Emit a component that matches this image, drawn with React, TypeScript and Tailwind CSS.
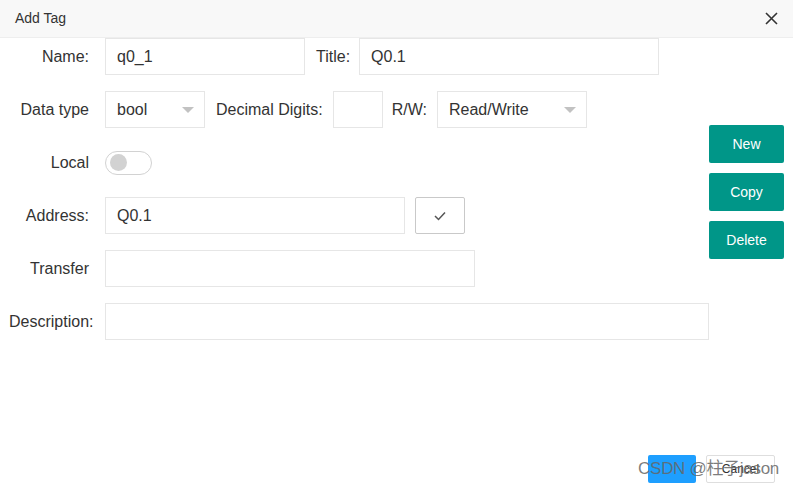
import { ReactNode } from "react";

const FONT = { fontFamily: '"Liberation Sans", Arial, "Noto Sans CJK SC", sans-serif' };

function Label({ children }: { children: ReactNode }) {
  return (
    <span className="w-[80px] shrink-0 whitespace-nowrap text-right text-[16px] text-[#333]">
      {children}
    </span>
  );
}

function Field({ value = "", className = "" }: { value?: string; className?: string }) {
  return (
    <div
      className={`flex h-[37px] shrink-0 items-center border border-[#e6e6e6] bg-white px-[11px] text-[16px] text-[#333] ${className}`}
    >
      {value}
    </div>
  );
}

function Select({ value, className = "" }: { value: string; className?: string }) {
  return (
    <div
      className={`flex h-[37px] shrink-0 items-center justify-between border border-[#e6e6e6] bg-white pl-[11px] pr-[10px] text-[16px] text-[#333] ${className}`}
    >
      <span>{value}</span>
      <span className="h-0 w-0 border-x-[6px] border-t-[6px] border-x-transparent border-t-[#c2c2c2]" />
    </div>
  );
}

export default function App() {
  return (
    <div className="relative flex h-[491px] w-[793px] flex-col overflow-hidden bg-white" style={FONT}>
      {/* header */}
      <div className="flex h-[38px] shrink-0 items-center justify-between border-b border-[#eeeeee] bg-[#f8f8f8] pl-[15px] pr-[15px]">
        <span className="text-[14px] text-[#333]">Add Tag</span>
        <svg width="13" height="13" viewBox="0 0 13 13" className="text-[#333]">
          <path d="M1 1 L12 12 M12 1 L1 12" stroke="currentColor" strokeWidth="1.6" />
        </svg>
      </div>

      {/* body */}
      <div className="flex flex-1">
        <div className="flex w-[709px] shrink-0 flex-col gap-4 pl-[9px]">
          <div className="flex items-center">
            <Label>Name:</Label>
            <Field value="q0_1" className="ml-[16px] w-[200px]" />
            <span className="ml-[11px] text-[16px] text-[#333]">Title:</span>
            <Field value="Q0.1" className="ml-[9px] w-[300px]" />
          </div>

          <div className="flex items-center">
            <Label>Data type</Label>
            <Select value="bool" className="ml-[16px] w-[100px]" />
            <span className="ml-[11px] whitespace-nowrap text-[16px] text-[#333]">Decimal Digits:</span>
            <Field className="ml-[10px] w-[50px]" />
            <span className="ml-[9px] text-[16px] text-[#333]">R/W:</span>
            <Select value="Read/Write" className="ml-[10px] w-[150px]" />
          </div>

          <div className="flex h-[37px] items-center">
            <Label>Local</Label>
            <div className="ml-[16px] flex h-[24px] w-[47px] items-center rounded-full border border-[#d2d2d2] pl-[4px]">
              <span className="h-[17px] w-[17px] rounded-full bg-[#d2d2d2]" />
            </div>
          </div>

          <div className="flex items-center">
            <Label>Address:</Label>
            <Field value="Q0.1" className="ml-[16px] w-[300px]" />
            <button className="ml-[10px] flex h-[37px] w-[50px] items-center justify-center rounded-[2px] border border-[#c9c9c9] bg-white">
              <svg width="12" height="10" viewBox="0 0 12 10">
                <path d="M1 5 L4.5 8.5 L11 1.5" fill="none" stroke="#555" strokeWidth="1.5" />
              </svg>
            </button>
          </div>

          <div className="flex items-center">
            <Label>Transfer</Label>
            <Field className="ml-[16px] w-[370px]" />
          </div>

          <div className="flex items-center">
            <Label>Description:</Label>
            <Field className="ml-[16px] w-[604px]" />
          </div>
        </div>

        <div className="flex flex-col gap-[10px] pt-[87px]">
          {["New", "Copy", "Delete"].map((b) => (
            <button
              key={b}
              className="flex h-[38px] w-[75px] items-center justify-center rounded-[2px] bg-[#009688] text-[14px] text-white"
            >
              {b}
            </button>
          ))}
        </div>
      </div>

      {/* footer */}
      <div className="flex shrink-0 justify-end gap-[10px] pb-[8px] pr-[18px]">
        <button aria-label="Save" className="h-[28px] w-[48px] rounded-[2px] bg-[#1e9fff]" />
        <button className="h-[28px] w-[69px] rounded-[2px] border border-[#dedede] bg-white text-[12px] text-[#333]">
          Cancel
        </button>
      </div>

      {/* watermark */}
      <span className="pointer-events-none absolute bottom-[10px] right-[14px] whitespace-nowrap text-[17px] tracking-[-0.3px] text-[#666]/85">
        CSDN @柱子jason
      </span>
    </div>
  );
}
